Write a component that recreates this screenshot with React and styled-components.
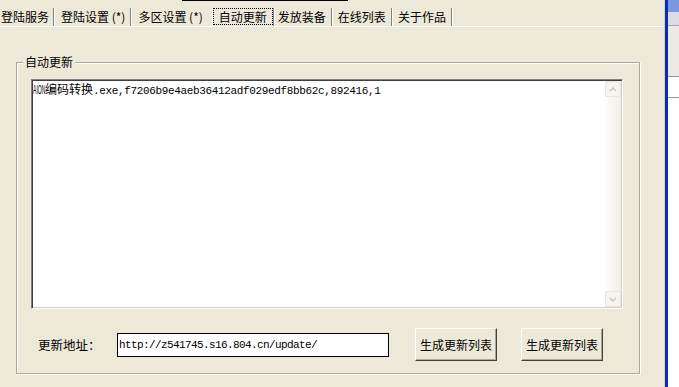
import React from 'react';
import styled, { createGlobalStyle } from 'styled-components';

const GlobalStyle = createGlobalStyle`
  html, body {
    margin: 0;
    padding: 0;
    background: #ece9d8;
  }
  body {
    font-family: "Noto Sans CJK SC", "DejaVu Sans", sans-serif;
    font-size: 12px;
    color: #000;
  }
`;

const tabs = [
  { label: '登陆服务', pl: 1, pr: 4 },
  { label: '登陆设置 (*)', pl: 6 },
  { label: '多区设置 (*)', pl: 6, pr: 9, noSep: true },
  { label: '自动更新', active: true },
  { label: '发放装备', pl: 3 },
  { label: '在线列表' },
  { label: '关于作品' },
];

const sideBands = [
  { h: 12, bg: '#7b98e0' },
  { h: 13, bg: '#dddce6', line: '#a9a8b4' },
  { h: 50, bg: '#eceae3', line: '#8796b2' },
  { h: 20, bg: '#ffffff', line: '#8b9bb8' },
];

const Chevron = ({ down }) => (
  <svg width="8" height="5" viewBox="0 0 8 5">
    <polyline
      points={down ? '1,1 4,4 7,1' : '1,4 4,1 7,4'}
      fill="none"
      stroke="#c9c8c1"
      strokeWidth="1.6"
    />
  </svg>
);

function App() {
  return (
    <Screen>
      <GlobalStyle />
      <Main>
        <TopEdge />
        <TabStrip>
          {tabs.map((t) =>
            t.active ? (
              <React.Fragment key={t.label}>
                <ActiveTab>
                  <FocusBox>{t.label}</FocusBox>
                </ActiveTab>
                <Sep />
              </React.Fragment>
            ) : (
              <React.Fragment key={t.label}>
                <Tab $pl={t.pl} $pr={t.pr}>
                  {t.label}
                </Tab>
                {!t.noSep && <Sep />}
              </React.Fragment>
            )
          )}
        </TabStrip>
        <TabRule />

        <GroupBox>
          <GroupCaption>自动更新</GroupCaption>
          <Memo>
            <MemoText>
              <Squeezed>
                <span>AION</span>
              </Squeezed>
              <Cjk>编码转换</Cjk>
              .exe,f7206b9e4aeb36412adf029edf8bb62c,892416,1
            </MemoText>
            <ScrollBar>
              <ArrowButton>
                <Chevron />
              </ArrowButton>
              <ArrowButton>
                <Chevron down />
              </ArrowButton>
            </ScrollBar>
          </Memo>

          <FormRow>
            <FieldLabel>更新地址：</FieldLabel>
            <UrlInput>http://z541745.s16.804.cn/update/</UrlInput>
            <PushButton $gap={26}>生成更新列表</PushButton>
            <PushButton $gap={24}>生成更新列表</PushButton>
          </FormRow>
        </GroupBox>
      </Main>
      <SideEdge />
      <FrameBar />
      <BehindWindow>
        {sideBands.map((b, i) => (
          <BehindBand key={i} $h={b.h} $bg={b.bg} $line={b.line} />
        ))}
      </BehindWindow>
    </Screen>
  );
}

const Screen = styled.div`
  display: flex;
  width: 679px;
  height: 387px;
  overflow: hidden;
`;

const Main = styled.div`
  width: 664px;
  display: flex;
  flex-direction: column;
  background: #ece9d8;
`;

const TopEdge = styled.div`
  height: 1px;
  width: 166px;
  margin-left: 182px;
  background: #000;
`;

const TabStrip = styled.div`
  display: flex;
  height: 18px;
  margin-top: 7px;
`;

const Tab = styled.div`
  height: 18px;
  line-height: 18px;
  white-space: nowrap;
  padding: 0 ${(p) => p.$pr ?? 5}px 0 ${(p) => p.$pl ?? 5}px;
`;

const ActiveTab = styled.div`
  height: 18px;
  border-left: 1px solid #fff;
`;

const FocusBox = styled.div`
  box-sizing: border-box;
  height: 17px;
  line-height: 15px;
  padding: 0 5px;
  border: 1px dotted #000;
  white-space: nowrap;
`;

const Sep = styled.div`
  width: 0;
  height: 18px;
  border-left: 1px solid #808080;
  border-right: 1px solid #fff;
`;

const TabRule = styled.div`
  height: 1px;
  background: #fff;
`;

const GroupBox = styled.div`
  position: relative;
  width: 624px;
  box-sizing: border-box;
  margin: 35px 0 0 16px;
  padding: 16px 15px 12px 14px;
  border: 1px solid #aca899;
  box-shadow: inset 1px 1px 0 #fff, 1px 1px 0 #fff;
`;

const GroupCaption = styled.span`
  position: absolute;
  top: -9px;
  left: 6px;
  padding: 0 2px;
  line-height: 16px;
  background: #ece9d8;
`;

const Memo = styled.div`
  display: flex;
  width: 592px;
  height: 230px;
  box-sizing: border-box;
  background: #fff;
  border: 1px solid;
  border-color: #808080 #fff #fff #808080;
  box-shadow: inset 1px 1px 0 #404040, inset -1px -1px 0 #d4d0c8;
`;

const MemoText = styled.div`
  flex: 1;
  padding: 2px 0 0 1px;
  font-family: "Liberation Mono", monospace;
  font-size: 11px;
  letter-spacing: -0.35px;
  line-height: 14px;
  white-space: nowrap;
`;

const Squeezed = styled.span`
  display: inline-block;
  width: 12px;
  letter-spacing: 0;
  font-family: "Liberation Sans", sans-serif;
  font-size: 13px;

  span {
    display: inline-block;
    transform: scaleX(0.39);
    transform-origin: left center;
  }
`;

const Cjk = styled.span`
  font-family: "Noto Sans CJK SC", sans-serif;
  font-size: 12px;
  letter-spacing: 0;
`;

const ScrollBar = styled.div`
  width: 16px;
  margin: 1px 1px 1px 0;
  display: flex;
  flex-direction: column;
  justify-content: space-between;
  background: linear-gradient(to right, #fdfdfb, #efeee8);
`;

const ArrowButton = styled.div`
  height: 16px;
  box-sizing: border-box;
  border: 1px solid #e6e5de;
  border-radius: 2px;
  background: #f5f4ef;
  display: flex;
  align-items: center;
  justify-content: center;
`;

const FormRow = styled.div`
  display: flex;
  align-items: center;
  height: 33px;
  margin: 19px 0 0 7px;
`;

const FieldLabel = styled.span`
  width: 79px;
  font-size: 12.5px;
  white-space: nowrap;
`;

const UrlInput = styled.div`
  width: 272px;
  height: 24px;
  box-sizing: border-box;
  border: 1px solid #000;
  background: #fff;
  padding-left: 1px;
  font-family: "Liberation Mono", monospace;
  font-size: 11px;
  letter-spacing: -0.6px;
  line-height: 22px;
  white-space: nowrap;
`;

const PushButton = styled.button`
  width: 82px;
  height: 33px;
  margin: 0 0 0 ${(p) => p.$gap}px;
  padding: 0;
  background: #ece9d8;
  font-family: "Noto Sans CJK SC", sans-serif;
  font-size: 12px;
  color: #000;
  border: 1px solid;
  border-color: #fff #404040 #404040 #fff;
  box-shadow: inset -1px -1px 0 #aca899;
  border-radius: 0;
`;

const SideEdge = styled.div`
  width: 1px;
  background: #d6d3c6;
`;

const FrameBar = styled.div`
  width: 3px;
  background: #0b2bb0;
`;

const BehindWindow = styled.div`
  flex: 1;
  display: flex;
  flex-direction: column;
  background: #fff;
`;

const BehindBand = styled.div`
  height: ${(p) => p.$h}px;
  background: ${(p) => p.$bg};
  border-bottom: ${(p) => (p.$line ? `1px solid ${p.$line}` : 'none')};
`;

export default App;
